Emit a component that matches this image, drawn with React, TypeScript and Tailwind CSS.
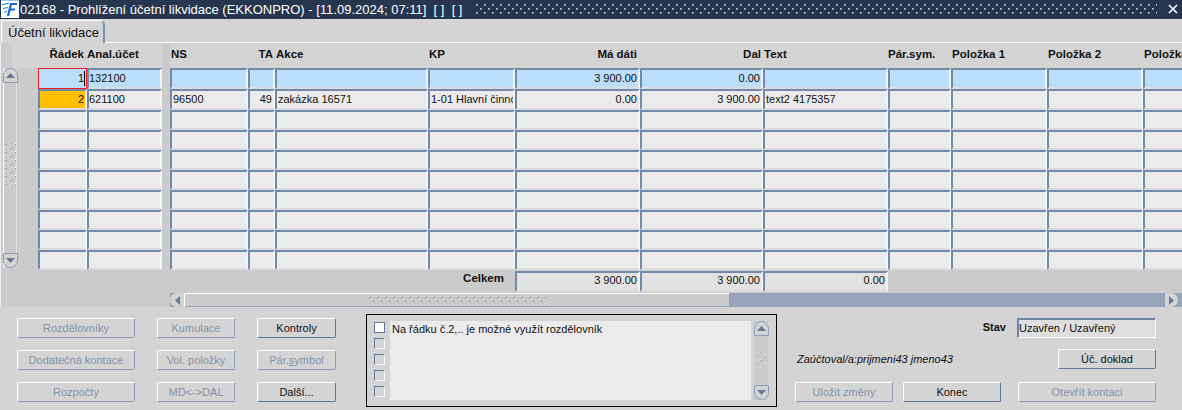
const sans = "font-['Liberation_Sans',Arial,sans-serif]"

// widths of the table columns, the third one is the gap after Anal.účet
const gridCols = 'grid-cols-[49px_75px_8px_78px_27px_153px_87px_125px_123px_125px_63px_96px_96px_96px]'

const headers = [
  { label: 'Řádek', align: 'text-right pr-[3px]' },
  { label: 'Anal.účet', align: 'text-left' },
  null,
  { label: 'NS', align: 'text-left pl-[1px]' },
  { label: 'TA', align: 'text-right pr-[2px]' },
  { label: 'Akce', align: 'text-left pl-[1px]' },
  { label: 'KP', align: 'text-left pl-[1px]' },
  { label: 'Má dáti', align: 'text-right pr-[3px]' },
  { label: 'Dal', align: 'text-right pr-[2px]' },
  { label: 'Text', align: 'text-left pl-[1px]' },
  { label: 'Pár.sym.', align: 'text-left' },
  { label: 'Položka 1', align: 'text-left pl-[1px]' },
  { label: 'Položka 2', align: 'text-left pl-[1px]' },
  { label: 'Položka 3', align: 'text-left pl-[1px]' },
]

const rows = [
  { h: 'h-[21px]', bg: 'bg-[#bbdefb]', cells: ['1', '132100', '', '', '', '', '3 900.00', '0.00', '', '', '', '', ''] },
  { h: 'h-[21px]', bg: 'bg-[#ebebeb]', cells: ['2', '621100', '96500', '49', 'zakázka 16571', '1-01 Hlavní činnost', '0.00', '3 900.00', 'text2 4175357', '', '', '', ''] },
  ...Array.from({ length: 8 }, () => ({ h: 'h-[20px]', bg: 'bg-[#ebebeb]', cells: Array(13).fill('') as string[] })),
]

// TA, Má dáti and Dal are the right aligned columns
const rightAligned = [3, 6, 7]

function Dots({ width, height, id, dx = 8, dy = 8, light = '#ffffff', shade = '#9aa6b8' }: { width: number; height: number; id: string; dx?: number; dy?: number; light?: string; shade?: string }) {
  return (
    <svg width={width} height={height} className="block shrink-0">
      <defs>
        <pattern id={id} x="0" y="0" width={dx} height={dy} patternUnits="userSpaceOnUse">
          <rect x="1" y="1" width="2" height="2" fill={shade} />
          <rect x="1" y="1" width="1" height="1" fill={light} />
          <rect x={dx / 2 + 1} y={dy / 2 + 1} width="2" height="2" fill={shade} />
          <rect x={dx / 2 + 1} y={dy / 2 + 1} width="1" height="1" fill={light} />
        </pattern>
      </defs>
      <rect width={width} height={height} fill={`url(#${id})`} />
    </svg>
  )
}

function Logo() {
  return (
    <svg width="18" height="18" viewBox="0 0 18 18" className="block shrink-0">
      <rect width="18" height="18" fill="#ffffff" />
      <rect x="0" y="0" width="18" height="1" fill="#9ec4f0" />
      <path d="M7 16 L10 4 H16 M8.5 9.5 H14" stroke="#1565d8" strokeWidth="2.2" fill="none" />
      <path d="M1 5 L8 3 M2 8.5 L7 7.5 M3 12 L6 11.5" stroke="#1e88e5" strokeWidth="1.2" fill="none" />
    </svg>
  )
}

function Cell({ children, bg, right, h, leading = 'leading-[17px]', px = 'px-[1px]' }: { children?: React.ReactNode; bg: string; right?: boolean; h?: string; leading?: string; px?: string }) {
  return (
    <div className={`${h} ${bg} ${leading} ${px} min-w-0 overflow-hidden whitespace-nowrap border-2 border-t-[#7389aa] border-l-[#7389aa] border-r-[#f4f4f4] border-b-[#dcdcdc] text-[11px] text-[#111] ${right ? 'text-right' : 'text-left'}`}>
      {children}
    </div>
  )
}

function Btn({ label, on, className = '' }: { label: React.ReactNode; on?: boolean; className?: string }) {
  return (
    <button className={`h-[20px] rounded-[2px] border border-t-white border-l-white ${on ? 'border-r-[#5f7396] border-b-[#5f7396] text-[#111]' : 'border-r-[#8c9ab0] border-b-[#8c9ab0] text-[#8693a8]'} bg-[#d4d4d4] text-center text-[11px] leading-[17px] ${className}`}>
      {label}
    </button>
  )
}

function ScrollButton({ dir }: { dir: 'up' | 'down' }) {
  return (
    <div className={`flex h-[15px] w-[15px] items-center justify-center border border-[#8a9cb8] bg-[#d4d4d4] ${dir === 'up' ? 'rounded-t-[8px]' : 'rounded-b-[8px]'}`}>
      <svg width="9" height="5" viewBox="0 0 9 5">
        <path d={dir === 'up' ? 'M4.5 0 L9 5 H0 Z' : 'M0 0 H9 L4.5 5 Z'} fill="#66799a" />
      </svg>
    </div>
  )
}

export default function App() {
  return (
    <div className={`flex h-[410px] w-[1182px] flex-col overflow-hidden bg-[#d4d4d4] ${sans}`}>
      {/* Title bar */}
      <div className="flex h-[19px] shrink-0 items-start bg-[#27364f] text-white">
        <div className="ml-[1px]"><Logo /></div>
        <span className="ml-[1px] w-[455px] shrink-0 whitespace-pre text-[13px] leading-[19px]">02168 - Prohlížení účetní likvidace (EKKONPRO) - [11.09.2024; 07:11]  [ ]  [ ]</span>
        <div className="mt-[3px]"><Dots id="titleDots" width={682} height={13} dx={8} dy={8} light="#d7dde6" shade="#7c8aa0" /></div>
        <svg width="14" height="14" viewBox="0 0 14 14" className="ml-[9px] mt-[2px]">
          <path d="M3 3 L11 11 M11 3 L3 11" stroke="#ffffff" strokeWidth="1.6" />
        </svg>
      </div>

      {/* Tab strip */}
      <div className="flex h-[24px] shrink-0 items-end">
        <div className="ml-[1px] h-[23px] w-[104px] rounded-tr-[5px] border-t border-l border-r-2 border-t-white border-l-white border-r-[#7f93b0] bg-[#d4d4d4] pl-[6px] text-[13px] leading-[23px] text-[#111]">
          Účetní likvidace
        </div>
        <div className="h-[1px] flex-1 bg-white" />
      </div>

      {/* Table panel */}
      <div className="flex h-[264px] shrink-0 flex-col border-l border-l-[#eeeeee] bg-[#cbcbcb]">
        <div className="flex">
          <div className="w-[37px] shrink-0">
            <div className="ml-[11px] h-[25px] bg-[#d4d4d4]" />
            <div className="ml-[2px] flex h-[200px] w-[14px] flex-col items-center justify-between border-x border-l-white border-r-[#dddddd]">
              <ScrollButton dir="up" />
              <div className="mb-[6px]"><Dots id="vDots" width={12} height={46} dx={10} dy={8} /></div>
              <ScrollButton dir="down" />
            </div>
          </div>

          <div className={`grid w-[1144px] ${gridCols} overflow-hidden`}>
            {headers.map((col, i) =>
              col ? (
                <div key={i} className={`h-[25px] whitespace-nowrap bg-[#d4d4d4] text-[11.5px] font-bold leading-[23px] text-[#111] ${col.align}`}>
                  {col.label}
                </div>
              ) : (
                <div key={i} className="h-[25px] bg-[#cbcbcb]" />
              ),
            )}

            {rows.map((row, r) => (
              <div key={r} className="contents">
                {r === 0 ? (
                  <div className={`${row.h} relative border border-[#ee1c25] bg-[#bbdefb] pr-[2px] text-right text-[11px] leading-[19px] text-[#111]`}>
                    {row.cells[0]}
                    <span className="absolute right-[1px] top-[2px] h-[15px] w-[1px] bg-black" />
                  </div>
                ) : (
                  <Cell h={row.h} bg={r === 1 ? 'bg-[#ffc000]' : row.bg} right>
                    {row.cells[0]}
                  </Cell>
                )}
                <Cell h={row.h} bg={row.bg} px="px-0">{row.cells[1]}</Cell>
                <div />
                {row.cells.slice(2).map((c, i) => (
                  <Cell key={i} h={row.h} bg={row.bg} right={rightAligned.includes(i + 2)}>
                    {c}
                  </Cell>
                ))}
              </div>
            ))}

            {/* Totals */}
            <div className="col-span-7 mt-[1px] h-[21px] whitespace-nowrap pr-[11px] text-right text-[11.5px] font-bold leading-[15px] text-[#111]">Celkem</div>
            <div className="mt-[1px]"><Cell h="h-[21px]" bg="bg-[#e2e2e2]" right leading="leading-[15px]">3 900.00</Cell></div>
            <div className="mt-[1px]"><Cell h="h-[21px]" bg="bg-[#e2e2e2]" right leading="leading-[15px]">3 900.00</Cell></div>
            <div className="mt-[1px]"><Cell h="h-[21px]" bg="bg-[#e2e2e2]" right leading="leading-[15px]">0.00</Cell></div>
          </div>
        </div>

        {/* Horizontal scrollbar */}
        <div className="ml-[169px] mt-[1px] flex h-[15px] items-stretch bg-[#96a4b8]">
          <div className="flex w-[15px] items-center justify-center rounded-l-[7px] border-r border-r-white bg-[#d4d4d4]">
            <svg width="5" height="9" viewBox="0 0 5 9"><path d="M5 0 V9 L0 4.5 Z" fill="#66799a" /></svg>
          </div>
          <div className="flex w-[544px] items-center justify-center border-y border-t-white border-b-[#96a4b8] bg-[#cbcbcb]">
            <Dots id="hDots" width={180} height={10} dx={8} dy={8} />
          </div>
          <div className="flex-1" />
          <div className="mr-[4px] flex w-[13px] items-center justify-center rounded-r-[7px] bg-[#d4d4d4]">
            <svg width="5" height="9" viewBox="0 0 5 9"><path d="M0 0 V9 L5 4.5 Z" fill="#66799a" /></svg>
          </div>
        </div>
      </div>

      {/* Bottom buttons, message box and status */}
      <div className="flex flex-1">
        <div className="ml-[17px] mt-[11px] grid h-[84px] grid-cols-[118px_78px_79px] grid-rows-[20px_20px_20px] gap-x-[22px] gap-y-[12px]">
          <Btn label="Rozdělovníky" />
          <Btn label="Kumulace" />
          <Btn label="Kontroly" on />
          <Btn label="Dodatečná kontace" />
          <Btn label="Vol. položky" />
          <Btn label={<>Pár.<u>s</u>ymbol</>} />
          <Btn label="Rozpočty" />
          <Btn label="MD<->DAL" />
          <Btn label="Další..." on />
        </div>

        <div className="ml-[30px] mt-[7px] flex h-[93px] w-[411px] shrink-0 border border-black bg-[#d4d4d4] py-[6px] pl-[7px] pr-[8px]">
          <div className="flex w-[12px] shrink-0 flex-col gap-[5px] pt-[1px]">
            <div className="h-[11px] w-[11px] border border-[#66799a] bg-white" />
            {[0, 1, 2, 3].map(i => (
              <div key={i} className="h-[11px] w-[11px] border border-t-[#66799a] border-l-[#66799a] border-r-white border-b-white bg-[#d4d4d4]" />
            ))}
          </div>
          <div className="ml-[4px] w-[362px] bg-[#ebebeb] pl-[2px] text-[11px] leading-[16px] text-[#111]">Na řádku č.2,.. je možné využít rozdělovník</div>
          <div className="ml-[3px] flex w-[14px] flex-col items-center justify-between bg-[#cbcbcb]">
            <ScrollButton dir="up" />
            <Dots id="mDots" width={10} height={14} dx={8} dy={8} />
            <ScrollButton dir="down" />
          </div>
        </div>

        <div className="ml-[18px] flex flex-1 flex-col">
          <div className="mt-[11px] flex h-[20px] items-center justify-end pr-[26px]">
            <span className="mb-[2px] mr-[11px] text-[11px] font-bold text-[#111]">Stav</span>
            <div className="h-[20px] w-[139px] border border-t-2 border-l-2 border-t-[#6d84a6] border-l-[#6d84a6] border-r-white border-b-white bg-[#dfdfdf] text-[11px] leading-[16px] text-[#111]">Uzavřen / Uzavřený</div>
          </div>
          <div className="mt-[11px] flex h-[20px] items-center justify-between pr-[26px]">
            <span className="pl-[2px] text-[11px] italic text-[#111]">Zaúčtoval/a:prijmeni43 jmeno43</span>
            <Btn label="Úč. doklad" on className="w-[98px]" />
          </div>
          <div className="mt-[13px] flex h-[20px] items-center pr-[26px]">
            <Btn label="Uložit změny" className="w-[98px]" />
            <Btn label="Konec" on className="ml-[10px] w-[98px]" />
            <Btn label="Otevřít kontaci" className="ml-[17px] w-[138px]" />
          </div>
        </div>
      </div>
    </div>
  )
}
